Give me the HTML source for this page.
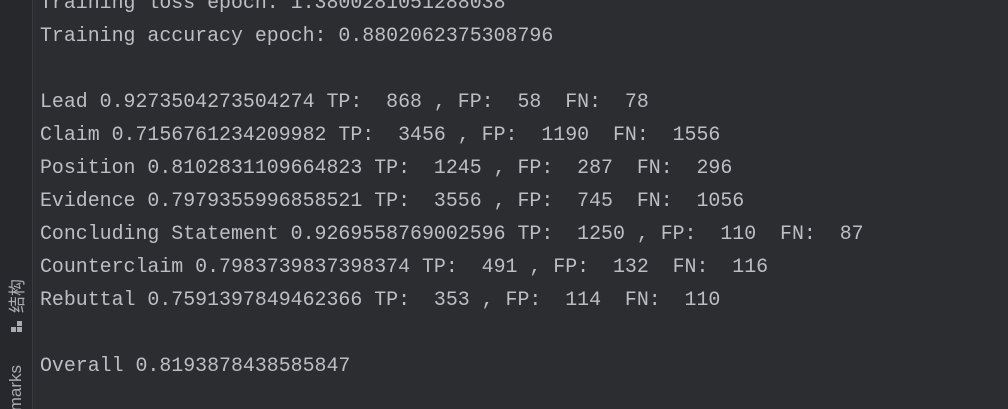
<html><head><style>
html,body{margin:0;width:1008px;height:409px;overflow:hidden;background:#2b2d30;position:relative}
#side{position:absolute;left:0;top:0;width:32px;height:409px;overflow:hidden;background:#27282c;border-right:1px solid #393b40}
#main{position:absolute;left:40px;top:-14px;font-family:"Liberation Mono",monospace;font-size:19.9px;line-height:33px;color:#bcbec4;white-space:pre}
.v{position:absolute;writing-mode:vertical-rl;text-orientation:sideways;transform:rotate(180deg);color:#a8abb2;font-family:"Liberation Sans","Noto Sans CJK SC",sans-serif;font-size:17px;white-space:nowrap;line-height:20px}
</style></head><body>
<div id="side">
<div class="v" style="left:8px;top:279px">结构</div>
<div style="position:absolute;left:11px;top:327px;width:5px;height:5px;background:#a8abb2"></div>
<div style="position:absolute;left:17px;top:327px;width:5px;height:5px;background:#a8abb2"></div>
<div style="position:absolute;left:17px;top:321px;width:5px;height:5px;background:#a8abb2"></div>
<div class="v" style="left:6px;top:365px">marks</div>
</div>
<div id="main">Training loss epoch: 1.3800281051288038
Training accuracy epoch: 0.8802062375308796

Lead 0.9273504273504274 TP:  868 , FP:  58  FN:  78
Claim 0.7156761234209982 TP:  3456 , FP:  1190  FN:  1556
Position 0.8102831109664823 TP:  1245 , FP:  287  FN:  296
Evidence 0.7979355996858521 TP:  3556 , FP:  745  FN:  1056
Concluding Statement 0.9269558769002596 TP:  1250 , FP:  110  FN:  87
Counterclaim 0.7983739837398374 TP:  491 , FP:  132  FN:  116
Rebuttal 0.7591397849462366 TP:  353 , FP:  114  FN:  110

Overall 0.8193878438585847</div>
</body></html>
